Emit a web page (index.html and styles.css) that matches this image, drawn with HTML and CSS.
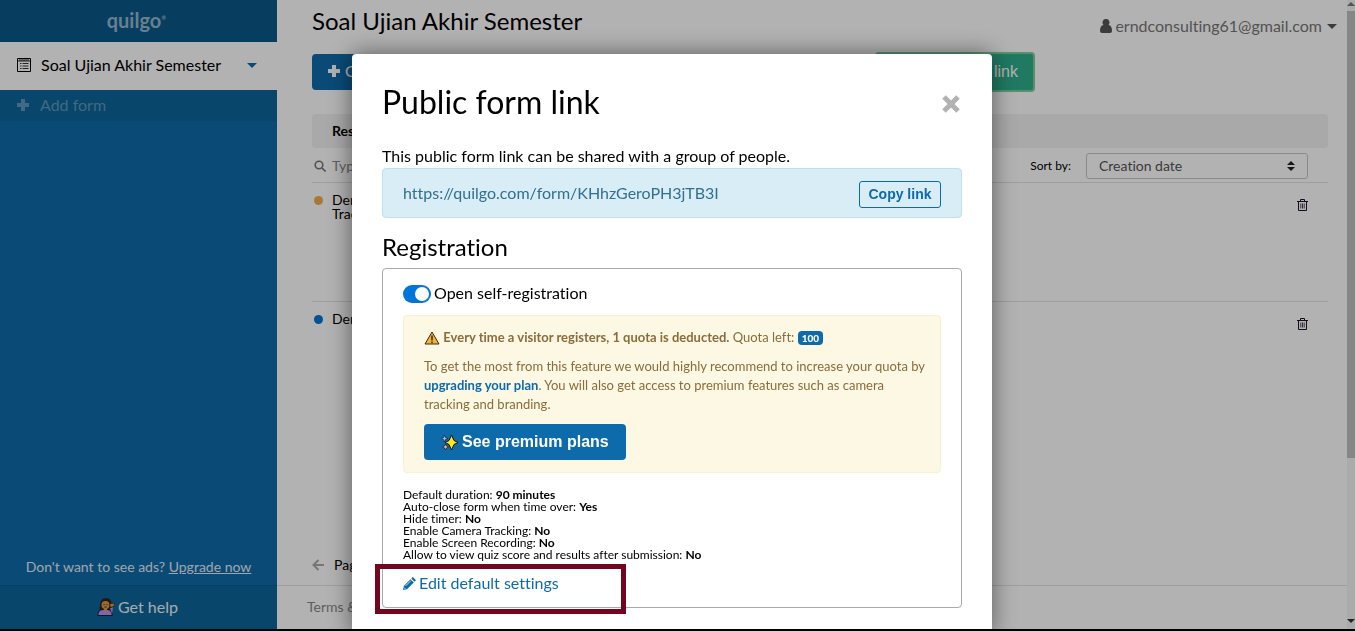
FILE: index.html
```html
<!DOCTYPE html>
<html lang="en">
<head>
<meta charset="utf-8">
<title>Quilgo</title>
<link rel="stylesheet" href="styles.css">
</head>
<body>
<div class="app">
  <aside class="sidebar">
    <div class="brand">quilgo<span class="brand-mark">®</span></div>
    <button class="form-switch" type="button">
      <svg width="14" height="14" viewBox="0 0 14 14" fill="none" stroke="#000"><path d="M.5.5h13v13H.5z"/><path stroke-width=".8" d="M1 3h12M3 1v2M5 1v2M7 1v2M9 1v2M11 1v2M3 5.500h1.500M5.500 5.500h6M3 8h1.500M5.500 8h6M3 10.500h1.500M5.500 10.500h6"/></svg>
      <span class="form-name">Soal Ujian Akhir Semester</span>
      <i class="caret caret-blue"></i>
    </button>
    <a class="add-form" href="#">
      <svg width="14" height="14" viewBox="0 0 14 14"><path fill="currentColor" d="M5 1h4v4h4v4H9v4H5V9H1V5h4z"/></svg>
      Add form
    </a>
    <p class="ads">Don't want to see ads? <a href="#">Upgrade now</a></p>
    <a class="help" href="#">
      <svg width="18" height="18" viewBox="0 0 18 18"><path fill="#33211d" d="M2 17L3 6Q4 0 9 0t6 6v9z"/><path fill="#b494ee" stroke="#241c33" d="M.8 17.500q0-6 5.500-6h4q4.500 0 5 6z"/><path fill="#e09a44" d="M7 10h3v3H7z"/><circle cx="8.500" cy="7" r="4" fill="#e09a44"/><path fill="#e09a44" stroke="#33211d" stroke-width=".6" d="M13 5.500h4.500v1.800L15 9h-2z"/><path fill="#b494ee" d="M13 10l3-.5-1 6z"/><path stroke="#33211d" fill="none" d="M6.500 6.500h1M9.500 6.500h1M7.500 9h2"/></svg>
      Get help
    </a>
  </aside>

  <main class="main">
    <div class="content">
      <header class="top">
        <h1>Soal Ujian Akhir Semester</h1>
        <button class="account" type="button">
          <svg width="12" height="14" viewBox="0 0 12 14"><path fill="currentColor" d="M6 0a3.200 3.500 0 0 1 2.500 6Q12 6.500 12 12q0 2-2 2H2q-2 0-2-2 0-5.500 3.500-6A3.200 3.500 0 0 1 6 0z"/></svg>
          <span>erndconsulting61@gmail.com</span>
          <i class="caret"></i>
        </button>
      </header>
      <div class="actions">
        <button class="btn-create" type="button">
          <svg width="14" height="14" viewBox="0 0 14 14"><path fill="currentColor" d="M5 1h4v4h4v4H9v4H5V9H1V5h4z"/></svg>
          Create
        </button>
        <button class="btn-link" type="button">Public form link</button>
      </div>
      <div class="tabs"><b>Results</b></div>
      <div class="filters">
        <label class="search">
          <svg width="12" height="12" viewBox="0 0 12 12" fill="none" stroke="#777" stroke-width="1.600"><circle cx="5" cy="5" r="3.800"/><path d="M8 8l3.500 3.500"/></svg>
          <input type="text" placeholder="Type" aria-label="Search">
        </label>
        <label class="sort-label" for="sort">Sort by:</label>
        <span class="select-wrap">
          <select id="sort"><option>Creation date</option></select>
          <svg class="sorter" width="8" height="10" viewBox="0 0 8 10"><path fill="#222" d="M4 0l4 4H0zM4 10L0 6h8z"/></svg>
        </span>
      </div>
      <div class="row">
        <i class="dot dot-orange"></i><span class="row-name">Demo<br>Tracking</span>
        <button class="trash" type="button" aria-label="Delete"><svg width="11" height="12" viewBox="0 0 11 12" fill="none" stroke="#20102a"><path d="M0 2.500h11M3.500 2V.500h4V2M1.500 3v8.500h8V3"/><path stroke-width=".8" d="M3.800 4.500v5M5.500 4.500v5M7.200 4.500v5"/></svg></button>
      </div>
      <div class="row">
        <i class="dot dot-blue"></i><span class="row-name">Demo</span>
        <button class="trash" type="button" aria-label="Delete"><svg width="11" height="12" viewBox="0 0 11 12" fill="none" stroke="#20102a"><path d="M0 2.500h11M3.500 2V.500h4V2M1.500 3v8.500h8V3"/><path stroke-width=".8" d="M3.800 4.500v5M5.500 4.500v5M7.200 4.500v5"/></svg></button>
      </div>
      <div class="pager">
        <svg width="12" height="12" viewBox="0 0 12 12" fill="none" stroke="#aaa" stroke-width="2"><path d="M12 6H2M6.500 1L1.500 6l5 5"/></svg>
        <span>Page</span>
      </div>
    </div>
    <footer class="footer"><a href="#">Terms &amp;</a></footer>
  </main>
  <div class="scroll"><i class="scroll-arrow up"></i><i class="scroll-thumb"></i><i class="scroll-arrow down"></i></div>
</div>
<div class="taskbar"></div>

<div class="overlay">
  <section class="modal" role="dialog" aria-labelledby="modal-title">
    <div class="modal-head">
      <h2 id="modal-title">Public form link</h2>
      <button class="close" type="button" aria-label="Close"><svg width="18" height="18" viewBox="0 0 18 18" fill="none" stroke="#b2b2b2" stroke-width="5"><path d="M2 2l14 14M16 2L2 16"/></svg></button>
    </div>
    <p class="intro">This public form link can be shared with a group of people.</p>
    <div class="share">
      <span>https://quilgo.com/form/KHhzGeroPH3jTB3I</span>
      <button class="copy" type="button">Copy link</button>
    </div>
    <h3>Registration</h3>
    <div class="panel">
      <label class="toggle"><input type="checkbox" role="switch" checked>Open self-registration</label>
      <div class="notice">
        <p class="quota">
          <svg width="16" height="14" viewBox="0 0 16 14"><path fill="#f5b335" stroke="#3a2c12" stroke-linejoin="round" d="M8 1l7 12H1z"/><path stroke="#3a2c12" stroke-width="1.500" d="M8 4.500v5M8 10.500V12"/></svg>
          <b>Every time a visitor registers, 1 quota is deducted.</b> Quota left: <span class="badge">100</span>
        </p>
        <p class="advice">To get the most from this feature we would highly recommend to increase your quota by <a href="#">upgrading your plan</a>. You will also get access to premium features such as camera tracking and branding.</p>
        <button class="premium" type="button">
          <svg width="17" height="17" viewBox="0 0 17 17" stroke="#111"><path fill="#ffe619" d="M10.500 1L13 6.500l4 2-4 2-2.500 5.500L8 10.500l-4-2 4-2z"/><path fill="#9cb8dc" stroke-width=".6" d="M3.500 1l1 2.500L7 4.500l-2.500 1L3.500 8l-1-2.500L.5 4.500l2-1z"/><path fill="#f0a58a" stroke-width=".6" d="M4.500 10l1 2 2 1-2 1-1 2-1-2-2-1 2-1z"/></svg>
          See premium plans
        </button>
      </div>
      <ul class="settings">
        <li>Default duration: <b>90 minutes</b></li>
        <li>Auto-close form when time over: <b>Yes</b></li>
        <li>Hide timer: <b>No</b></li>
        <li>Enable Camera Tracking: <b>No</b></li>
        <li>Enable Screen Recording: <b>No</b></li>
        <li>Allow to view quiz score and results after submission: <b>No</b></li>
      </ul>
      <a class="edit" href="#">
        <svg width="13" height="13" viewBox="0 0 13 13"><path fill="currentColor" d="M0 13l.8-4L7.500 2.200l3.300 3.300L4 12.200zM8.300 1.500L9.800 0l3.200 3.200-1.500 1.500z"/><path stroke="#fff" stroke-width=".8" d="M2.500 9L8 3.500M1 10.500L2.500 12"/></svg>
        Edit default settings
      </a>
      <div class="highlight"></div>
    </div>
  </section>
</div>
</body>
</html>
```
FILE: styles.css
```css
* { box-sizing: border-box; }
body {
  margin: 0;
  height: 100vh;
  overflow: hidden;
  display: flex;
  flex-direction: column;
  font: 16px/20px Lato, "Liberation Sans", sans-serif;
  font-variant-ligatures: none;
  color: #000;
}
h1, h2, h3, p, ul { margin: 0; padding: 0; font-weight: 400; }
button, input, select { font: inherit; font-variant-ligatures: none; color: inherit; }
button { border: 0; background: none; padding: 0; }
a { color: inherit; text-decoration: none; }
svg { flex: none; }

.app { flex: 1; display: flex; min-height: 0; background: #fff; }
.taskbar { height: 2px; background: #000; position: relative; z-index: 3; }

.sidebar { flex: none; width: 277px; display: flex; flex-direction: column; background: #0e6bab; color: #fff; }
.brand { height: 42px; padding-right: 4px; background: #0b5989; color: #94b8d0; font-size: 20px; line-height: 36px; font-weight: 700; text-align: center; }
.brand-mark { font-size: 6px; vertical-align: 8px; }
.form-switch { height: 48px; padding: 0 20px 2px 17px; display: flex; align-items: center; gap: 10px; background: #fff; color: #000; text-align: left; }
.form-name { flex: 1; }
.caret { border: 5px solid transparent; border-top-color: currentColor; border-bottom: 0; }
.caret-blue { color: #0e6bab; }
.add-form { height: 31px; padding: 0 0 2px 16px; display: flex; align-items: center; gap: 10px; background: #0d659b; color: #5f97bd; }
.ads { margin: auto 0 8px; font-size: 14px; text-align: center; color: #e4edf4; }
.ads a { text-decoration: underline; }
.help { height: 44px; padding: 0 2px 2px 0; border-top: 1px solid #0c5b90; background: #0d659b; color: #f0f5f9; display: flex; align-items: center; justify-content: center; gap: 3px; }

.main { flex: 1; min-width: 0; display: flex; flex-direction: column; }
.content { flex: 1; display: flex; flex-direction: column; padding: 0 19px 0 35px; }
.top { height: 54px; display: flex; justify-content: space-between; }
.top h1 { font-size: 24px; line-height: 42px; }
.account { height: 52px; margin-right: -9px; display: flex; align-items: center; gap: 3px; color: #777; }
.account svg, .account .caret { color: #555; }
.account .caret { margin-left: 2px; }
.actions { display: flex; justify-content: space-between; padding-right: 293px; }
.btn-create { width: 120px; height: 36px; padding: 0 0 2px 15px; display: flex; align-items: center; gap: 4px; border-radius: 4px; background: #0e6bab; color: #fff; }
.btn-link { width: 160px; height: 40px; margin: -2px 0; padding-right: 15px; border: 2px solid #7dcf9f; border-radius: 4px; background: #2eae8c; color: #fff; text-align: right; font-family: "Liberation Sans", sans-serif; }
.tabs { margin-top: 24px; height: 34px; padding: 0 20px; border-radius: 4px; background: #f2f2f2; font-size: 14px; line-height: 34px; }
.filters { height: 35px; padding: 2px 20px 0 2px; display: flex; align-items: center; border-bottom: 1px solid #e2e2e2; font-size: 14px; }
.search { flex: 1; display: flex; align-items: center; gap: 6px; }
.search input { border: 0; padding: 0; background: none; }
.search input::placeholder { color: #888; }
.sort-label { font-size: 12px; margin-right: 15px; }
.select-wrap { position: relative; width: 222px; }
.select-wrap select { width: 100%; height: 26px; padding: 0 12px; border: 1px solid #c6c6c6; border-radius: 3px; background: #fff; color: #555; appearance: none; }
.sorter { position: absolute; right: 13px; top: 8px; }
.row { height: 119px; padding: 10px 20px 0 2px; display: flex; align-items: flex-start; border-bottom: 1px solid #e2e2e2; font-size: 14px; line-height: 14px; }
.row + .row { border-bottom: 0; }
.dot { width: 9px; height: 9px; margin: 3px 9px 0 0; border-radius: 50%; }
.dot-orange { background: #f0ad4e; }
.dot-blue { background: #0275d8; }
.row-name { flex: 1; }
.trash { height: 12px; margin-top: 6px; }
.trash svg { display: block; }
.pager { margin-top: auto; height: 40px; display: flex; align-items: center; gap: 10px; font-size: 14px; }
.footer { height: 44px; padding-left: 30px; border-top: 1px solid #e4e4e4; color: #888; font-size: 14px; line-height: 42px; }

.scroll { flex: none; width: 8px; display: flex; flex-direction: column; align-items: center; background: #f5f5f5; }
.scroll-arrow { border: 4px solid transparent; }
.up { border-top: 0; border-bottom-color: #777; margin: 2px 0 5px; }
.down { border-bottom: 0; border-top-color: #333; margin: auto 0 6px; }
.scroll-thumb { width: 8px; height: 71%; background: #c1c1c1; }

.overlay { position: fixed; inset: 0 0 2px 0; padding: 54px 11px 0 0; overflow: hidden; display: flex; justify-content: center; align-items: flex-start; background: rgba(0, 0, 0, .3); }
.modal { width: 640px; padding: 28px 30px; border-radius: 4px; background: #fff; box-shadow: 0 0 24px rgba(0, 0, 0, .5); }
.modal-head { display: flex; justify-content: space-between; align-items: center; height: 40px; }
.modal-head h2 { font-size: 32px; line-height: 40px; }
.close { padding: 4px 2px 0 0; }
.close svg { display: block; }
.intro { margin: 24px 0 2px; }
.share { height: 50px; padding: 0 20px; display: flex; align-items: center; justify-content: space-between; border: 1px solid #bcdff1; border-radius: 4px; background: #d9edf7; color: #31708f; }
.copy { width: 82px; height: 27px; margin-top: 2px; border: 1px solid #0e6bab; border-radius: 3px; color: #0e6bab; font: bold 14px "Liberation Sans", sans-serif; }
h3 { margin: 13px 0 5px; font-size: 24px; line-height: 32px; }
.panel { position: relative; padding: 14px 20px 14px; border: 1px solid #aaa; border-radius: 4px; }
.toggle { display: flex; align-items: center; gap: 3px; }
.toggle input { appearance: none; width: 28px; height: 18px; margin: 2px 0 0; padding: 2px; border-radius: 9px; background: #0275d8; display: flex; justify-content: flex-end; }
.toggle input::before { content: ""; width: 14px; height: 14px; border-radius: 50%; background: #fff; }
.notice { margin-top: 12px; padding: 12px 10px 12px 20px; border: 1px solid #faf0d2; border-radius: 4px; background: #fcf8e3; color: #8a6d3b; font-size: 13px; line-height: 19px; }
.quota svg { vertical-align: -3px; }
.badge { padding: 1px 4px; border-radius: 4px; background: #0e6bab; color: #fff; font-size: 10px; font-weight: 900; line-height: 12px; display: inline-block; }
.advice { margin: 10px 0; }
.advice a { color: #0e6bab; font-weight: 700; }
.premium { height: 36px; padding: 0 17px; display: flex; align-items: center; gap: 4px; border-radius: 4px; background: #0e6bab; color: #fff; font: bold 16px "Liberation Sans", sans-serif; }
.settings { margin-top: 16px; list-style: none; font-size: 12px; line-height: 12px; }
.edit { margin-top: 12px; display: flex; align-items: center; gap: 3px; color: #0e6bab; }
.highlight { position: absolute; left: -8px; bottom: -7px; width: 251px; height: 50px; border: 5px solid #73051f; pointer-events: none; }
```
